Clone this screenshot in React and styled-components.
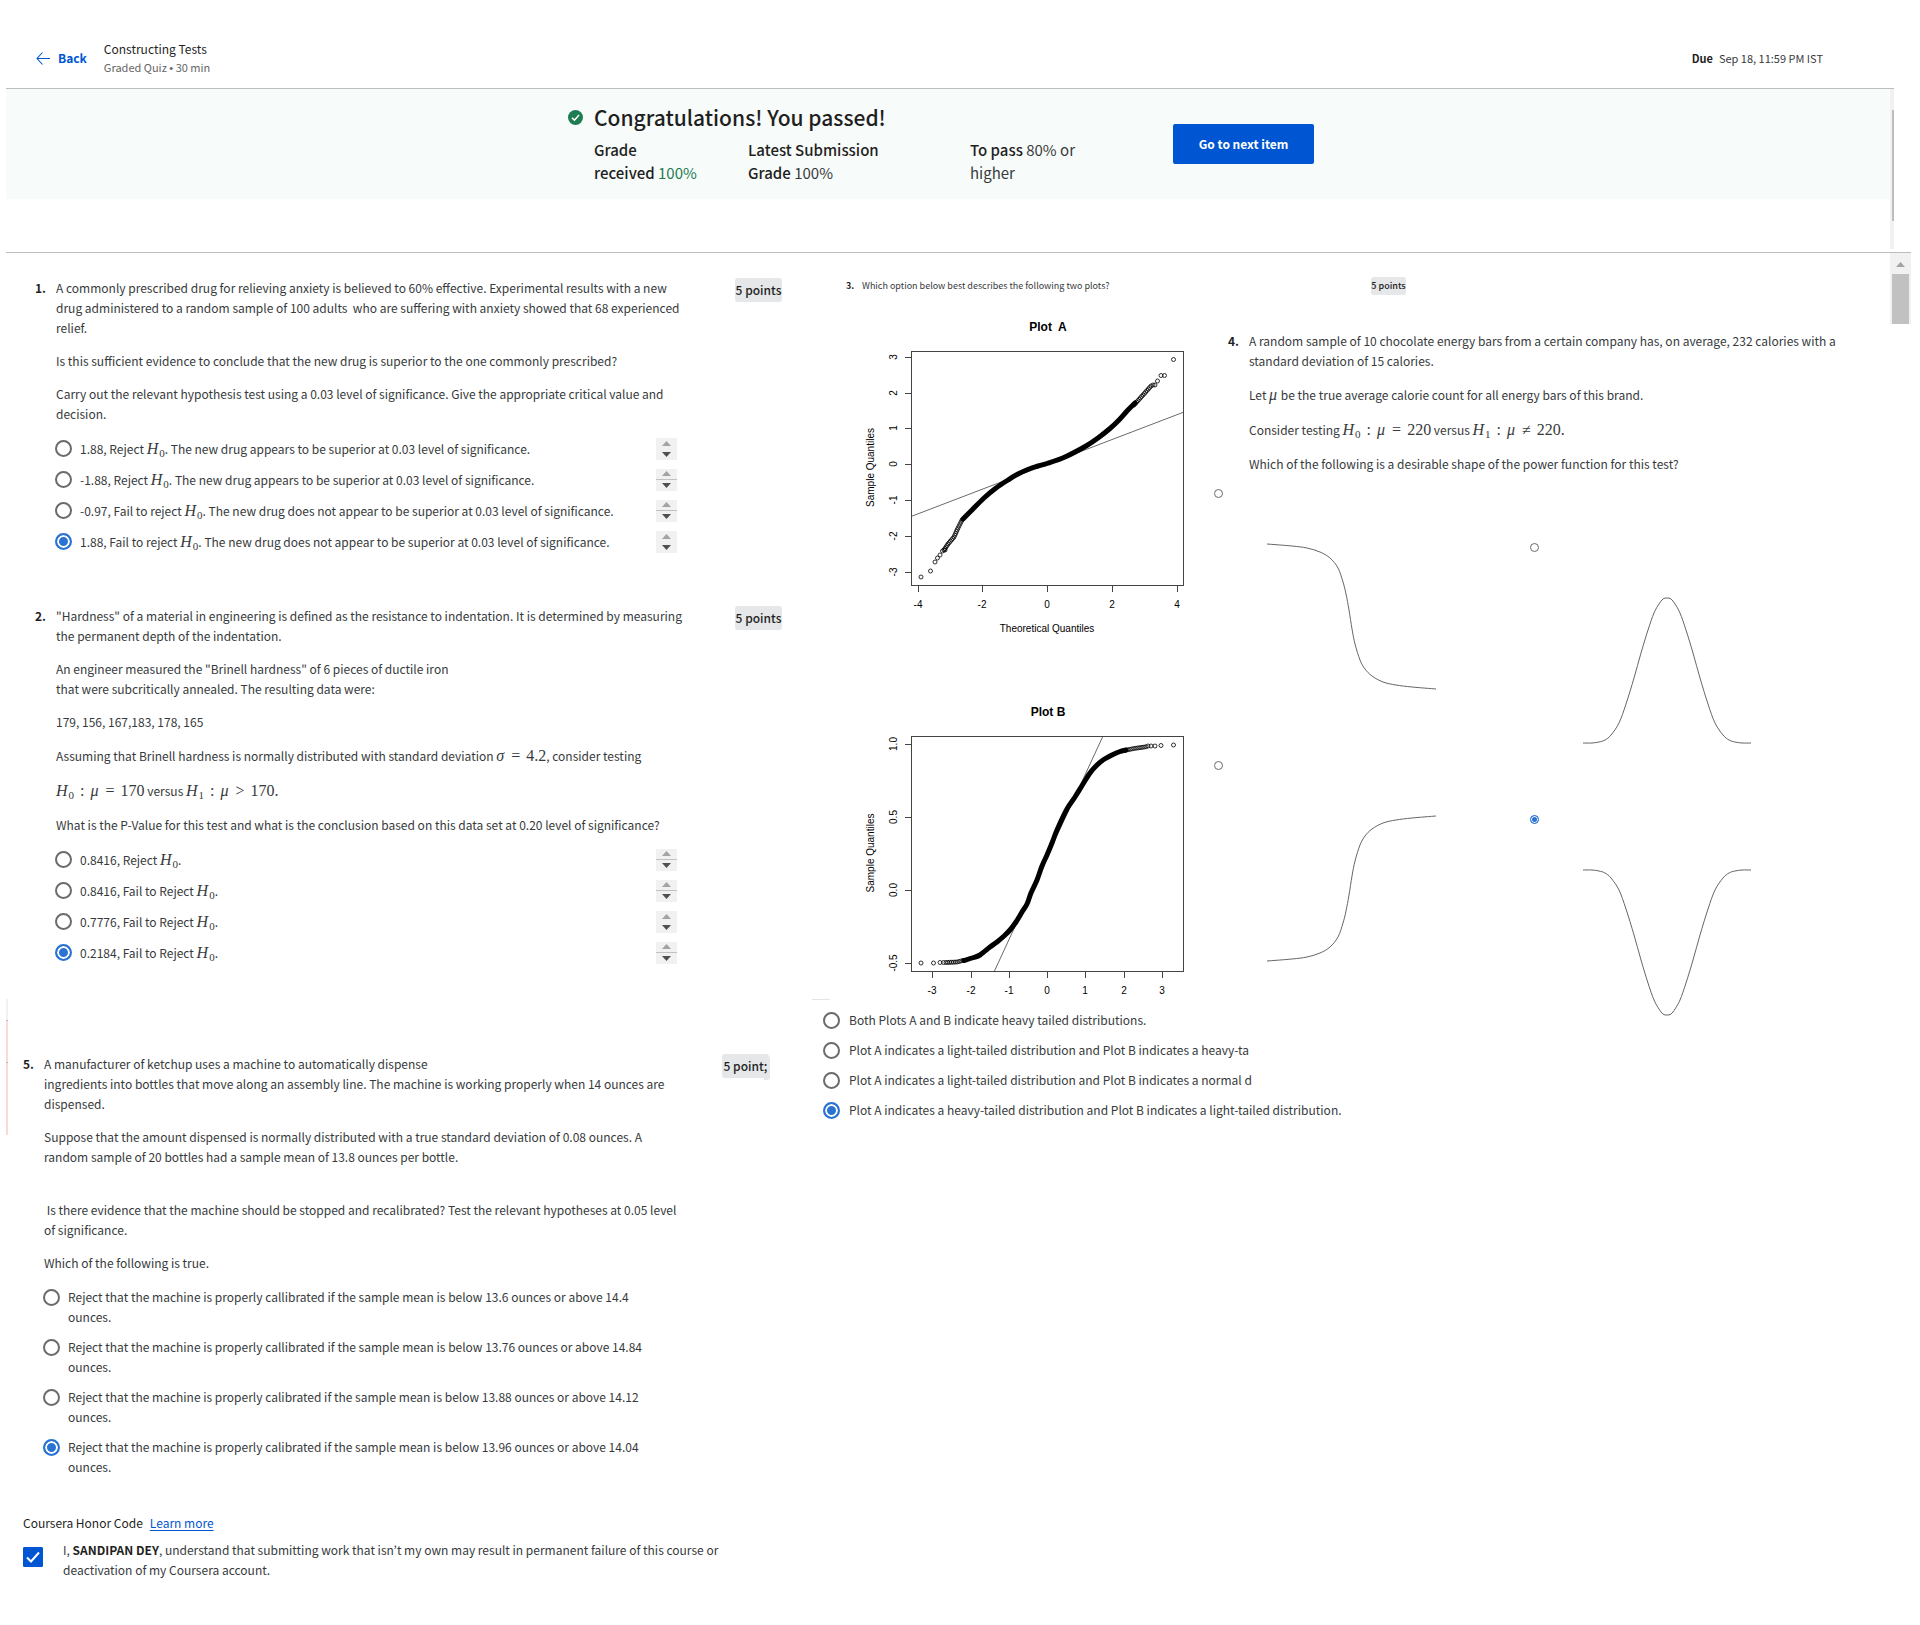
import React from "react";
import styled, { createGlobalStyle } from "styled-components";

const GlobalStyle = createGlobalStyle`
  *, *::before, *::after { box-sizing: border-box; }
  body {
    margin: 0;
    background: #fff;
    color: #373a3c;
    font-family: "Noto Sans CJK KR", "Noto Sans", sans-serif;
    font-size: 12px;
    line-height: 20px;
  }
  p, h1, h2, fieldset, legend { margin: 0; padding: 0; border: 0; font: inherit; min-width: 0; }
  button { font: inherit; border: 0; padding: 0; cursor: pointer; }
`;

/* ---------- header ---------- */
const Header = styled.header`
  display: flex;
  align-items: center;
  gap: 17px;
  height: 89px;
  margin: 0 26px 0 6px;
  padding: 28px 71px 0 30px;
  border-bottom: 1px solid #bdbdbd;
`;
const BackLink = styled.a`
  display: flex;
  align-items: center;
  gap: 8px;
  color: #0056d2;
  font-weight: 700;
  text-decoration: none;
`;
const TitleBlock = styled.div`
  flex: 1;
  line-height: 18px;
`;
const QuizTitle = styled.h1`
  color: #1f1f1f;
`;
const QuizMeta = styled.p`
  font-size: 11px;
  color: #666;
`;
const Bullet = styled.span`
  font-family: "Liberation Sans", sans-serif;
`;
const Due = styled.p`
  font-size: 11px;
  color: #373a3c;
  strong { margin-right: 6px; color: #1f1f1f; }
`;
const HeaderRow = styled.div`
  display: flex;
  align-items: center;
  flex: 1;
`;

/* ---------- result banner ---------- */
const BannerRow = styled.div`
  display: flex;
  margin: 0 26px 0 6px;
`;
const BannerArea = styled.section`
  flex: 1;
  height: 163px;
`;
const Banner = styled.div`
  display: flex;
  align-items: flex-start;
  height: 110px;
  padding: 11px 0 0 562px;
  background: #f7fbf9;
`;
const BannerIcon = styled.svg`
  flex: none;
  margin: 10px 11px 0 0;
`;
const BannerBody = styled.div`
  width: 579px;
`;
const BannerTitle = styled.h2`
  font-size: 21px;
  line-height: 34px;
  font-weight: 500;
  color: #1f1f1f;
`;
const Stats = styled.div`
  display: grid;
  grid-template-columns: 154px 222px 1fr;
  margin-top: 4px;
  font-size: 15px;
  line-height: 23px;
  strong { font-weight: 500; color: #1f1f1f; }
`;
const Passed = styled.span`
  color: #1d7c50;
`;
const NextButton = styled.button`
  width: 141px;
  height: 40px;
  margin-top: 24px;
  border-radius: 2px;
  background: #0056d2;
  color: #fff;
  font-size: 12px;
  font-weight: 700;
`;
const SlimTrack = styled.div`
  width: 4px;
  height: 160px;
  padding: 21px 0 0 2px;
  background: #f1f1f1;
`;
const SlimThumb = styled.div`
  height: 111px;
  background: #bdbdbd;
`;

/* ---------- main grid ---------- */
const Main = styled.main`
  display: grid;
  grid-template-columns: minmax(0, 806fr) minmax(0, 1078fr) 21px;
  margin: 0 9px 0 6px;
  border-top: 1px solid #bdbdbd;
  padding-bottom: 44px;
`;
const LeftColumn = styled.div`
  padding-top: 25px;
`;
const RightColumn = styled.div`
  padding-top: 24px;
`;
const Track = styled.div`
  display: flex;
  flex-direction: column;
  align-items: center;
  width: 21px;
  height: 71px;
  background: #f1f1f1;
`;
const Arrow = styled.svg`
  flex: none;
  margin: 9px 0 7px;
`;
const Thumb = styled.div`
  width: 17px;
  height: 50px;
  background: #c1c1c1;
`;

/* ---------- questions ---------- */
const Question = styled.section`
  display: flex;
  align-items: flex-start;
  position: relative;
  padding: ${(p) => (p.$shifted ? "0 43px 0 17px" : "0 30px 0 29px")};
  margin-bottom: ${(p) => p.$after || 0}px;
`;
const Number = styled.strong`
  flex: none;
  width: 21px;
  color: #1f1f1f;
`;
const Body = styled.div`
  flex: 1;
  min-width: 0;
  display: flex;
  flex-direction: column;
  gap: 13px;
  padding-right: 58px;
`;
const Text = styled.p`
  white-space: nowrap;
  line-height: ${(p) => (p.$math ? 22 : 20)}px;
  padding-top: ${(p) => (p.$spaced ? 20 : 0)}px;
`;
const Points = styled.span`
  flex: none;
  width: ${(p) => (p.$small ? 35 : 47)}px;
  height: ${(p) => (p.$small ? 18 : 24)}px;
  line-height: ${(p) => (p.$small ? 18 : 24)}px;
  font-size: ${(p) => (p.$small ? 9 : 12)}px;
  border-radius: 3px;
  background: #e5e7e8;
  color: #1f1f1f;
  font-weight: 500;
  text-align: center;
  white-space: nowrap;
`;
const PointsTail = styled.span`
  position: absolute;
  right: 42px;
  top: 2px;
  width: 6px;
  height: 24px;
  border-radius: 0 3px 3px 0;
  background: #e5e7e8;
  z-index: -1;
`;
const EdgeStripe = styled.span`
  position: absolute;
  left: 0;
  top: -55px;
  width: 2px;
  height: 136px;
  background: linear-gradient(#f1f1f1 0 21px, #bbb 21px 22px, #f8dcd3 22px 63px, #bbb 63px 64px, #f8dcd3 64px);
`;

const Options = styled.fieldset`
  display: flex;
  flex-direction: column;
  gap: ${(p) => p.$gap || 0}px;
  margin-top: ${(p) => p.$lift || 0}px;
`;
const OptionRow = styled.div`
  display: flex;
  align-items: center;
  height: ${(p) => p.$height}px;
`;
const OptionLabel = styled.label`
  display: flex;
  align-items: ${(p) => (p.$top ? "flex-start" : "center")};
  gap: ${(p) => p.$gap || 8}px;
  flex: 1;
  white-space: nowrap;
`;
const Radio = styled.input`
  appearance: none;
  flex: none;
  width: ${(p) => (p.$small ? 9 : 17)}px;
  height: ${(p) => (p.$small ? 9 : 17)}px;
  margin: ${(p) => (p.$top ? "2px 0 0 -1px" : "0 0 0 -1px")};
  border: ${(p) => (p.$small ? 1 : 2)}px solid #6b6b6b;
  border-radius: 50%;
  background: #fff;
  &:checked {
    border-color: #2a73d2;
    background: #2a73d2;
    box-shadow: inset 0 0 0 ${(p) => (p.$small ? 1 : 2)}px #fff;
  }
`;
const Stepper = styled.span`
  display: flex;
  flex-direction: column;
  flex: none;
  width: 21px;
  height: 22px;
  background: #f1f1f1;
`;
const StepButton = styled.button`
  display: flex;
  align-items: center;
  justify-content: center;
  height: 11px;
  background: transparent;
  border-bottom: ${(p) => (p.$line ? "1px solid #c1c1c1" : "0")};
`;

/* ---------- math ---------- */
const MathText = styled.span`
  font-family: "Liberation Serif", serif;
  font-size: 16px;
  line-height: 1;
  color: #373a3c;
  i { margin-right: 1px; }
  sub { font-size: 11px; line-height: 0; vertical-align: -3px; }
`;
const Rel = styled.span`
  margin: 0 2px;
`;

/* ---------- question 3 and 4 ---------- */
const Heading3 = styled.div`
  display: flex;
  align-items: center;
  height: 18px;
  padding-left: 34px;
`;
const Number3 = styled.strong`
  width: 16px;
  font-size: 9px;
  color: #1f1f1f;
`;
const HeadingText = styled.p`
  width: 509px;
  font-size: 9px;
`;
const Pair = styled.div`
  display: grid;
  grid-template-columns: 402px minmax(0, 1fr);
`;
const Plots = styled.section`
  padding-top: 20px;
`;
const Plot = styled.svg`
  display: block;
  margin: 0 0 ${(p) => p.$after || 0}px 48px;
  font-family: "Liberation Sans", Arial, sans-serif;
  font-size: 10px;
  fill: #000;
`;
const Divider = styled.div`
  width: 18px;
  height: 1px;
  margin-bottom: 5px;
  background: #e5e5e5;
`;
const PlotOptions = styled.div`
  padding-left: 12px;
`;
const PowerQuestion = styled.section`
  padding-top: 36px;
`;
const PowerText = styled.div`
  display: flex;
  padding-left: 14px;
`;
const CurveGrid = styled.fieldset`
  display: grid;
  grid-template-columns: 316px 1fr;
  margin-top: 15px;
`;
const CurveColumn = styled.div`
  display: flex;
  flex-direction: column;
  gap: 72px;
  padding-top: ${(p) => (p.$lower ? 54 : 0)}px;
`;
const CurveLabel = styled.label`
  display: flex;
  flex-direction: column;
  gap: 46px;
  padding-left: 1px;
`;
const Curve = styled.svg`
  display: block;
  margin-left: 52px;
  overflow: visible;
`;

/* ---------- honor code ---------- */
const Honor = styled.section`
  padding: 36px 0 0 17px;
`;
const HonorTitle = styled.h2`
  display: flex;
  gap: 7px;
  color: #1f1f1f;
  a { color: #0056d2; text-underline-offset: 2px; }
`;
const HonorRow = styled.div`
  display: flex;
  align-items: flex-start;
  gap: 20px;
  margin-top: 7px;
  label { white-space: nowrap; }
  strong { color: #1f1f1f; }
`;
const CheckWrap = styled.span`
  display: grid;
  width: 20px;
  height: 20px;
  margin-top: 7px;
  > * { grid-area: 1 / 1; place-self: center; }
  svg { pointer-events: none; }
`;
const Check = styled.input`
  appearance: none;
  width: 20px;
  height: 20px;
  margin: 0;
  border-radius: 1px;
  border: 1px solid #0056d2;
  background: #fff;
  &:checked { background: #0056d2; }
`;

const H = ({ n }) => (
  <>
    <i>H</i>
    <sub>{n}</sub>
  </>
);
const H0 = () => (
  <MathText>
    <H n="0" />
  </MathText>
);
const Hypothesis = ({ n, sign, value }) => (
  <MathText>
    <H n={n} /> <Rel>:</Rel> <i>μ</i> <Rel>{sign}</Rel> {value}
  </MathText>
);

function StepperControl({ line }) {
  return (
    <Stepper>
      <StepButton type="button" aria-label="Up" $line={line}>
        <svg width="9" height="5" viewBox="0 0 9 5"><path d="M4.5 0L9 5H0z" fill="#a3a3a3" /></svg>
      </StepButton>
      <StepButton type="button" aria-label="Down">
        <svg width="9" height="5" viewBox="0 0 9 5"><path d="M0 0h9L4.5 5z" fill="#505050" /></svg>
      </StepButton>
    </Stepper>
  );
}

function OptionList({ name, items, picked, height, lines = [], stepper, gap, lift, spacing }) {
  return (
    <Options $gap={spacing} $lift={lift} aria-label={name}>
      {items.map((item, i) => (
        <OptionRow key={i} $height={height}>
          <OptionLabel $top={height === 40} $gap={gap}>
            <Radio type="radio" name={name} defaultChecked={picked === i} $top={height === 40} />
            <span>{item}</span>
          </OptionLabel>
          {stepper && <StepperControl line={lines.includes(i)} />}
        </OptionRow>
      ))}
    </Options>
  );
}

/* Smooth path through a list of points (Catmull-Rom to Bezier). */
function smooth(points) {
  let d = `M${points[0].join(" ")}`;
  for (let i = 0; i < points.length - 1; i++) {
    const a = points[i - 1] || points[i];
    const b = points[i];
    const c = points[i + 1];
    const e = points[i + 2] || c;
    d += `C${b[0] + (c[0] - a[0]) / 6} ${b[1] + (c[1] - a[1]) / 6} ${c[0] - (e[0] - b[0]) / 6} ${c[1] - (e[1] - b[1]) / 6} ${c[0]} ${c[1]}`;
  }
  return d;
}

/* Points spread evenly along a list of knots. */
function sample(knots, step) {
  const out = [];
  for (let k = 0; k < knots.length - 1; k++) {
    const [x1, y1] = knots[k];
    const [x2, y2] = knots[k + 1];
    const n = Math.max(1, Math.round(Math.hypot(x2 - x1, y2 - y1) / step));
    for (let i = 0; i < n; i++) out.push([x1 + ((x2 - x1) * i) / n, y1 + ((y2 - y1) * i) / n]);
  }
  return out;
}

const PLOT_A = {
  title: "Plot\u00a0 A",
  height: 325,
  top: 36,
  bottom: 271,
  line: [51, 201.5, 324, 97],
  x: [["-4", 58], ["-2", 122], ["0", 187], ["2", 252], ["4", 317]],
  y: [["3", 42], ["2", 78], ["1", 113], ["0", 149], ["-1", 185], ["-2", 221], ["-3", 257]],
  xTitle: true,
  loose: [[61, 262], [70.5, 256], [75, 247], [77.5, 243], [80, 240], [82.5, 236], [85, 235], [291, 71], [293, 70],
    [295, 70], [297.5, 66], [301, 60.5], [304.5, 60.5], [313.5, 44.5]],
  thin: [[84, 235], [88, 229], [94, 222], [98, 213], [101, 207], [103, 203]],
  thin2: [[274, 90], [283, 80], [291, 71]],
  knots: [[103, 204], [112, 195], [124, 183], [136, 173], [148, 165], [158, 159], [169, 154], [178, 151], [187, 148.5],
    [205, 142], [226, 131], [238, 123], [250, 113.5], [259, 105], [267, 96], [275, 88]],
};

const PLOT_B = {
  title: "Plot B",
  height: 299,
  top: 36,
  bottom: 272,
  line: [134, 272, 243, 36],
  x: [["-3", 72], ["-2", 111], ["-1", 149], ["0", 187], ["1", 225], ["2", 264], ["3", 302]],
  y: [["1.0", 44], ["0.5", 117], ["0.0", 190], ["-0.5", 263]],
  loose: [[61, 263], [73.5, 263], [80, 262.5], [83.5, 262.5], [301, 45.5], [313.5, 45], [295, 46], [291, 46], [288, 46]],
  thin: [[86, 262.5], [97, 262], [105, 260]],
  thin2: [[262, 51], [274, 48.5], [288, 46.5]],
  knots: [[104, 260.5], [112, 258], [120, 255], [130, 247], [137, 242], [144, 236], [150, 230], [156, 222], [162, 212],
    [167, 204], [171, 193], [177, 180], [182, 166], [187, 155], [192, 143], [197, 130], [207, 109], [215, 97], [223, 84],
    [230, 73], [236, 66], [243, 60], [252, 55], [260, 51.5], [266, 50]],
};

function QuantilePlot({ data, after }) {
  const rings = (points) => points.map(([x, y], i) => <circle key={i} cx={x} cy={y} r="2" />);
  const middle = (data.top + data.bottom) / 2;
  return (
    <Plot width="330" height={data.height} viewBox={`0 0 330 ${data.height}`} $after={after} role="img" aria-label={data.title}>
      <text x="188" y="16" textAnchor="middle" fontSize="12" fontWeight="700">{data.title}</text>
      <g fill="none" stroke="#444" strokeWidth="1">
        <rect x="51.5" y={data.top + 0.5} width="272" height={data.bottom - data.top - 1} shapeRendering="crispEdges" />
        <path d={`M${data.line[0]} ${data.line[1]}L${data.line[2]} ${data.line[3]}`} strokeWidth="0.8" />
        {data.x.map(([t, x]) => <path key={t} d={`M${x + 0.5} ${data.bottom}v6`} />)}
        {data.y.map(([t, y]) => <path key={t} d={`M51 ${y + 0.5}h-6`} />)}
      </g>
      <g fill="none" stroke="#000" strokeWidth="0.8">
        {rings(data.loose)}
        {rings(sample(data.thin, 2))}
        {rings(sample(data.thin2, 2))}
      </g>
      <path d={smooth(data.knots)} fill="none" stroke="#000" strokeWidth="5" strokeLinejoin="round" strokeLinecap="round" />
      {data.x.map(([t, x]) => <text key={t} x={x} y={data.bottom + 22} textAnchor="middle">{t}</text>)}
      {data.y.map(([t, y]) => (
        <text key={t} transform={`translate(37 ${y}) rotate(-90)`} textAnchor="middle">{t}</text>
      ))}
      <text transform={`translate(14 ${middle - 1}) rotate(-90)`} textAnchor="middle">Sample Quantiles</text>
      {data.xTitle && <text x="187" y={data.bottom + 46} textAnchor="middle">Theoretical Quantiles</text>}
    </Plot>
  );
}

const FALL = smooth([[0, 0], [25, 2], [40, 4], [53, 8], [63, 14], [71, 24], [76, 38], [79, 50], [82, 66], [85, 85], [88, 100],
  [93, 116], [98, 125], [105, 132], [116, 138], [129, 141], [145, 143], [169, 145]]);
const BELL_HALF = [[0, 145], [9, 145], [16, 144], [22, 142], [28, 137], [36, 125], [43, 106], [51, 80], [58, 55], [65, 32],
  [71, 15], [76, 6], [80, 1]];
const BELL = smooth([...BELL_HALF, [84, 0], ...BELL_HALF.map(([x, y]) => [168 - x, y]).reverse()]);

function CurveOption({ shape, flip, checked, label }) {
  return (
    <CurveLabel>
      <Radio type="radio" name="power-function" $small defaultChecked={checked} aria-label={label} />
      <Curve width="169" height="145" viewBox="0 0 169 145">
        <path
          d={shape}
          fill="none"
          stroke="#555"
          strokeWidth="0.9"
          transform={flip ? "matrix(1 0 0 -1 0 145)" : undefined}
        />
      </Curve>
    </CurveLabel>
  );
}

export default function App() {
  return (
    <>
      <GlobalStyle />
      <Header>
        <BackLink href="#back">
          <svg width="14" height="13" viewBox="0 0 14 13" fill="none" stroke="#0056d2" strokeWidth="1.1">
            <path d="M6.5 0.5L1 6.5L6.5 12.5M1 6.5H14" />
          </svg>
          Back
        </BackLink>
        <HeaderRow>
          <TitleBlock>
            <QuizTitle>Constructing Tests</QuizTitle>
            <QuizMeta>Graded Quiz <Bullet>•</Bullet> 30 min</QuizMeta>
          </TitleBlock>
          <Due><strong>Due</strong>Sep 18, 11:59 PM IST</Due>
        </HeaderRow>
      </Header>

      <BannerRow>
        <BannerArea>
          <Banner>
            <BannerIcon width="15" height="15" viewBox="0 0 15 15">
              <circle cx="7.5" cy="7.5" r="7.5" fill="#1d7c50" />
              <path d="M4 7.8L6.5 10.2L11 5" fill="none" stroke="#fff" strokeWidth="1.6" />
            </BannerIcon>
            <BannerBody>
              <BannerTitle>Congratulations! You passed!</BannerTitle>
              <Stats>
                <p><strong>Grade<br />received</strong> <Passed>100%</Passed></p>
                <p><strong>Latest Submission<br />Grade</strong> 100%</p>
                <p><strong>To pass</strong> 80% or<br />higher</p>
              </Stats>
            </BannerBody>
            <NextButton type="button">Go to next item</NextButton>
          </Banner>
        </BannerArea>
        <SlimTrack><SlimThumb /></SlimTrack>
      </BannerRow>

      <Main>
        <LeftColumn>
          <Question $after={49}>
            <Number>1.</Number>
            <Body>
              <Text>
                A commonly prescribed drug for relieving anxiety is believed to 60% effective. Experimental results with a new<br />
                drug administered to a random sample of 100 adults&nbsp; who are suffering with anxiety showed that 68 experienced<br />
                relief.
              </Text>
              <Text>Is this sufficient evidence to conclude that the new drug is superior to the one commonly prescribed?</Text>
              <Text>
                Carry out the relevant hypothesis test using a 0.03 level of significance. Give the appropriate critical value and<br />
                decision.
              </Text>
              <OptionList
                name="q1" height={31} picked={3} stepper lines={[1, 2]} lift={-4}
                items={[
                  <>1.88, Reject <H0 />. The new drug appears to be superior at 0.03 level of significance.</>,
                  <>-1.88, Reject <H0 />. The new drug appears to be superior at 0.03 level of significance.</>,
                  <>-0.97, Fail to reject <H0 />. The new drug does not appear to be superior at 0.03 level of significance.</>,
                  <>1.88, Fail to reject <H0 />. The new drug does not appear to be superior at 0.03 level of significance.</>,
                ]}
              />
            </Body>
            <Points>5 points</Points>
          </Question>

          <Question $after={86}>
            <Number>2.</Number>
            <Body>
              <Text>
                "Hardness" of a material in engineering is defined as the resistance to indentation. It is determined by measuring<br />
                the permanent depth of the indentation.
              </Text>
              <Text>
                An engineer measured the "Brinell hardness" of 6 pieces of ductile iron<br />
                that were subcritically annealed. The resulting data were:
              </Text>
              <Text>179, 156, 167,183, 178, 165</Text>
              <Text $math>
                Assuming that Brinell hardness is normally distributed with standard deviation{" "}
                <MathText><i>σ</i> <Rel>=</Rel> 4.2</MathText>, consider testing
              </Text>
              <Text $math>
                <Hypothesis n="0" sign="=" value="170" /> versus <Hypothesis n="1" sign=">" value="170." />
              </Text>
              <Text>What is the P-Value for this test and what is the conclusion based on this data set at 0.20 level of significance?</Text>
              <OptionList
                name="q2" height={31} picked={3} stepper lines={[0, 1, 3]} lift={-4}
                items={[
                  <>0.8416, Reject <H0 />.</>,
                  <>0.8416, Fail to Reject <H0 />.</>,
                  <>0.7776, Fail to Reject <H0 />.</>,
                  <>0.2184, Fail to Reject <H0 />.</>,
                ]}
              />
            </Body>
            <Points>5 points</Points>
          </Question>

          <Question $shifted>
            <EdgeStripe />
            <Number>5.</Number>
            <Body>
              <Text>
                A manufacturer of ketchup uses a machine to automatically dispense<br />
                ingredients into bottles that move along an assembly line. The machine is working properly when 14 ounces are<br />
                dispensed.
              </Text>
              <Text>
                Suppose that the amount dispensed is normally distributed with a true standard deviation of 0.08 ounces. A<br />
                random sample of 20 bottles had a sample mean of 13.8 ounces per bottle.
              </Text>
              <Text $spaced>
                &nbsp;Is there evidence that the machine should be stopped and recalibrated? Test the relevant hypotheses at 0.05 level<br />
                of significance.
              </Text>
              <Text>Which of the following is true.</Text>
              <OptionList
                name="q5" height={40} picked={3} spacing={10} lift={1}
                items={[
                  <>Reject that the machine is properly callibrated if the sample mean is below 13.6 ounces or above 14.4<br />ounces.</>,
                  <>Reject that the machine is properly callibrated if the sample mean is below 13.76 ounces or above 14.84<br />ounces.</>,
                  <>Reject that the machine is properly calibrated if the sample mean is below 13.88 ounces or above 14.12<br />ounces.</>,
                  <>Reject that the machine is properly calibrated if the sample mean is below 13.96 ounces or above 14.04<br />ounces.</>,
                ]}
              />
            </Body>
            <PointsTail />
            <Points>5 point;</Points>
          </Question>

          <Honor>
            <HonorTitle>Coursera Honor Code <a href="#honor">Learn more</a></HonorTitle>
            <HonorRow>
              <CheckWrap>
                <Check type="checkbox" id="honor" defaultChecked />
                <svg width="14" height="12" viewBox="0 0 14 12"><path d="M1 6.5L5 10.5L13 1.5" fill="none" stroke="#fff" strokeWidth="2" /></svg>
              </CheckWrap>
              <label htmlFor="honor">
                I, <strong>SANDIPAN DEY</strong>, understand that submitting work that isn’t my own may result in permanent failure of this course or<br />
                deactivation of my Coursera account.
              </label>
            </HonorRow>
          </Honor>
        </LeftColumn>

        <RightColumn>
          <Heading3>
            <Number3>3.</Number3>
            <HeadingText>Which option below best describes the following two plots?</HeadingText>
            <Points $small>5 points</Points>
          </Heading3>
          <Pair>
            <Plots>
              <QuantilePlot data={PLOT_A} after={60} />
              <QuantilePlot data={PLOT_B} />
              <Divider />
              <PlotOptions>
                <OptionList
                  name="q3" height={30} picked={3} gap={9}
                  items={[
                    "Both Plots A and B indicate heavy tailed distributions.",
                    "Plot A indicates a light-tailed distribution and Plot B indicates a heavy-ta",
                    "Plot A indicates a light-tailed distribution and Plot B indicates a normal d",
                    "Plot A indicates a heavy-tailed distribution and Plot B indicates a light-tailed distribution.",
                  ]}
                />
              </PlotOptions>
            </Plots>
            <PowerQuestion>
              <PowerText>
                <Number>4.</Number>
                <Body>
                  <Text>
                    A random sample of 10 chocolate energy bars from a certain company has, on average, 232 calories with a<br />
                    standard deviation of 15 calories.
                  </Text>
                  <Text $math>Let <MathText><i>μ</i></MathText> be the true average calorie count for all energy bars of this brand.</Text>
                  <Text $math>
                    Consider testing <Hypothesis n="0" sign="=" value="220" /> versus{" "}
                    <Hypothesis n="1" sign="≠" value="220." />
                  </Text>
                  <Text>Which of the following is a desirable shape of the power function for this test?</Text>
                </Body>
              </PowerText>
              <CurveGrid aria-label="Power function shapes">
                <CurveColumn>
                  <CurveOption shape={FALL} label="Decreasing curve" />
                  <CurveOption shape={FALL} flip label="Increasing curve" />
                </CurveColumn>
                <CurveColumn $lower>
                  <CurveOption shape={BELL} label="Bell curve" />
                  <CurveOption shape={BELL} flip checked label="Inverted bell curve" />
                </CurveColumn>
              </CurveGrid>
            </PowerQuestion>
          </Pair>
        </RightColumn>

        <Track>
          <Arrow width="9" height="5" viewBox="0 0 9 5"><path d="M4.5 0L9 5H0z" fill="#a3a3a3" /></Arrow>
          <Thumb />
        </Track>
      </Main>
    </>
  );
}
